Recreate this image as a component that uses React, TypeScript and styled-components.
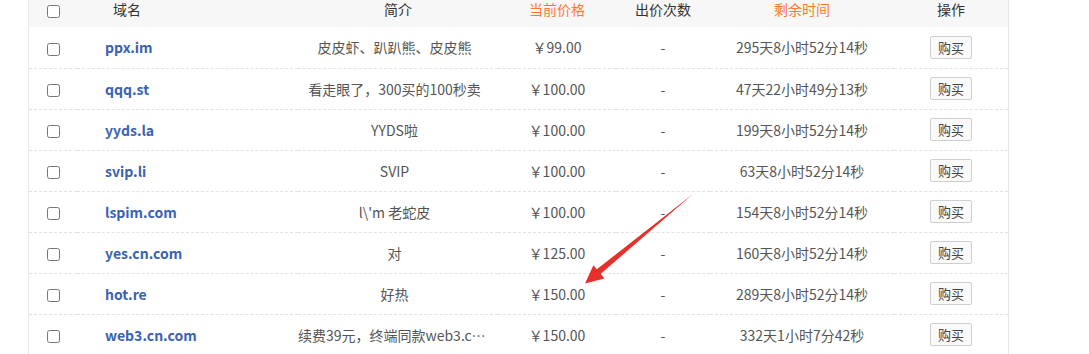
import React from 'react';
import styled, { createGlobalStyle } from 'styled-components';

const GlobalStyle = createGlobalStyle`
	html, body {
		margin: 0;
		padding: 0;
		background: #fff;
		overflow: hidden;
	}
	body {
		font-family: "Noto Sans CJK SC", "Noto Sans", sans-serif;
	}
`;

type Row = {
	domain: string;
	intro: string;
	price: string;
	bids: string;
	left: string;
};

const rows: Row[] = [
	{ domain: 'ppx.im', intro: '皮皮虾、趴趴熊、皮皮熊', price: '￥99.00', bids: '-', left: '295天8小时52分14秒' },
	{ domain: 'qqq.st', intro: '看走眼了，300买的100秒卖', price: '￥100.00', bids: '-', left: '47天22小时49分13秒' },
	{ domain: 'yyds.la', intro: 'YYDS啦', price: '￥100.00', bids: '-', left: '199天8小时52分14秒' },
	{ domain: 'svip.li', intro: 'SVIP', price: '￥100.00', bids: '-', left: '63天8小时52分14秒' },
	{ domain: 'lspim.com', intro: "l\\'m 老蛇皮", price: '￥100.00', bids: '-', left: '154天8小时52分14秒' },
	{ domain: 'yes.cn.com', intro: '对', price: '￥125.00', bids: '-', left: '160天8小时52分14秒' },
	{ domain: 'hot.re', intro: '好热', price: '￥150.00', bids: '-', left: '289天8小时52分14秒' },
	{ domain: 'web3.cn.com', intro: '续费39元，终端同款web3.com', price: '￥150.00', bids: '-', left: '332天1小时7分42秒' },
];

const columns = [48, 221, 200, 118, 94, 184, 114];

const Page = styled.div`
	position: relative;
	width: 1089px;
	height: 354px;
	overflow: hidden;
`;

const Frame = styled.div`
	margin: -9px 0 0 28px;
	width: 979px;
	border-left: 1px solid #e8e8e8;
	border-right: 1px solid #e8e8e8;
`;

const Table = styled.table`
	width: 100%;
	table-layout: fixed;
	border-collapse: collapse;
	font-size: 14px;
	color: #555;
`;

const HeadRow = styled.tr`
	height: 36px;
	background: #f7f7f7;
`;

const Th = styled.th<{ $hot?: boolean; $align?: string; $pad?: number }>`
	font-weight: normal;
	font-size: 14px;
	padding: 0 0 0 ${(p) => p.$pad ?? 0}px;
	text-align: ${(p) => p.$align ?? 'center'};
	color: ${(p) => (p.$hot ? '#ff7733' : '#333')};
`;

const BodyRow = styled.tr`
	height: 41px;
	border-bottom: 1px dashed #e2e2e2;
`;

const Td = styled.td<{ $align?: string; $pad?: number; $padRight?: number }>`
	padding: 0 ${(p) => p.$padRight ?? 0}px 0 ${(p) => p.$pad ?? 0}px;
	text-align: ${(p) => p.$align ?? 'center'};
	white-space: nowrap;
	overflow: hidden;
	text-overflow: ellipsis;
`;

const Check = styled.input.attrs({ type: 'checkbox' })`
	margin: 0;
	width: 13px;
	height: 13px;
	vertical-align: middle;
`;

const Domain = styled.a`
	color: #3a62b2;
	font-weight: bold;
	text-decoration: none;
	font-size: 14px;
`;

const BuyBtn = styled.button`
	width: 42px;
	height: 23px;
	padding: 0;
	border: 1px solid #cfcfcf;
	border-radius: 2px;
	background: #fafafa;
	color: #444;
	font-family: inherit;
	font-size: 13px;
	cursor: pointer;
`;

const Arrow = styled.svg`
	position: absolute;
	left: 0;
	top: 0;
	pointer-events: none;
`;

export default function App() {
	return (
		<Page>
			<GlobalStyle />
			<Frame>
				<Table>
					<colgroup>
						{columns.map((w, i) => (
							<col key={i} style={{ width: w }} />
						))}
					</colgroup>
					<thead>
						<HeadRow>
							<Th>
								<Check />
							</Th>
							<Th $align="left" $pad={36}>域名</Th>
							<Th>简介</Th>
							<Th $hot>当前价格</Th>
							<Th>出价次数</Th>
							<Th $hot>剩余时间</Th>
							<Th>操作</Th>
						</HeadRow>
					</thead>
					<tbody>
						{rows.map((r) => (
							<BodyRow key={r.domain}>
								<Td>
									<Check />
								</Td>
								<Td $align="left" $pad={28}>
									<Domain href="#">{r.domain}</Domain>
								</Td>
								<Td $padRight={7}>{r.intro}</Td>
								<Td>{r.price}</Td>
								<Td>{r.bids}</Td>
								<Td>{r.left}</Td>
								<Td>
									<BuyBtn>购买</BuyBtn>
								</Td>
							</BodyRow>
						))}
					</tbody>
				</Table>
			</Frame>
			<Arrow width="1089" height="354" viewBox="0 0 1089 354">
				<polygon
					points="693,194 600.8,273.8 604.4,278.4 585,283.5 593.4,265.2 596.8,269.3"
					fill="#e8302a"
				/>
			</Arrow>
		</Page>
	);
}
